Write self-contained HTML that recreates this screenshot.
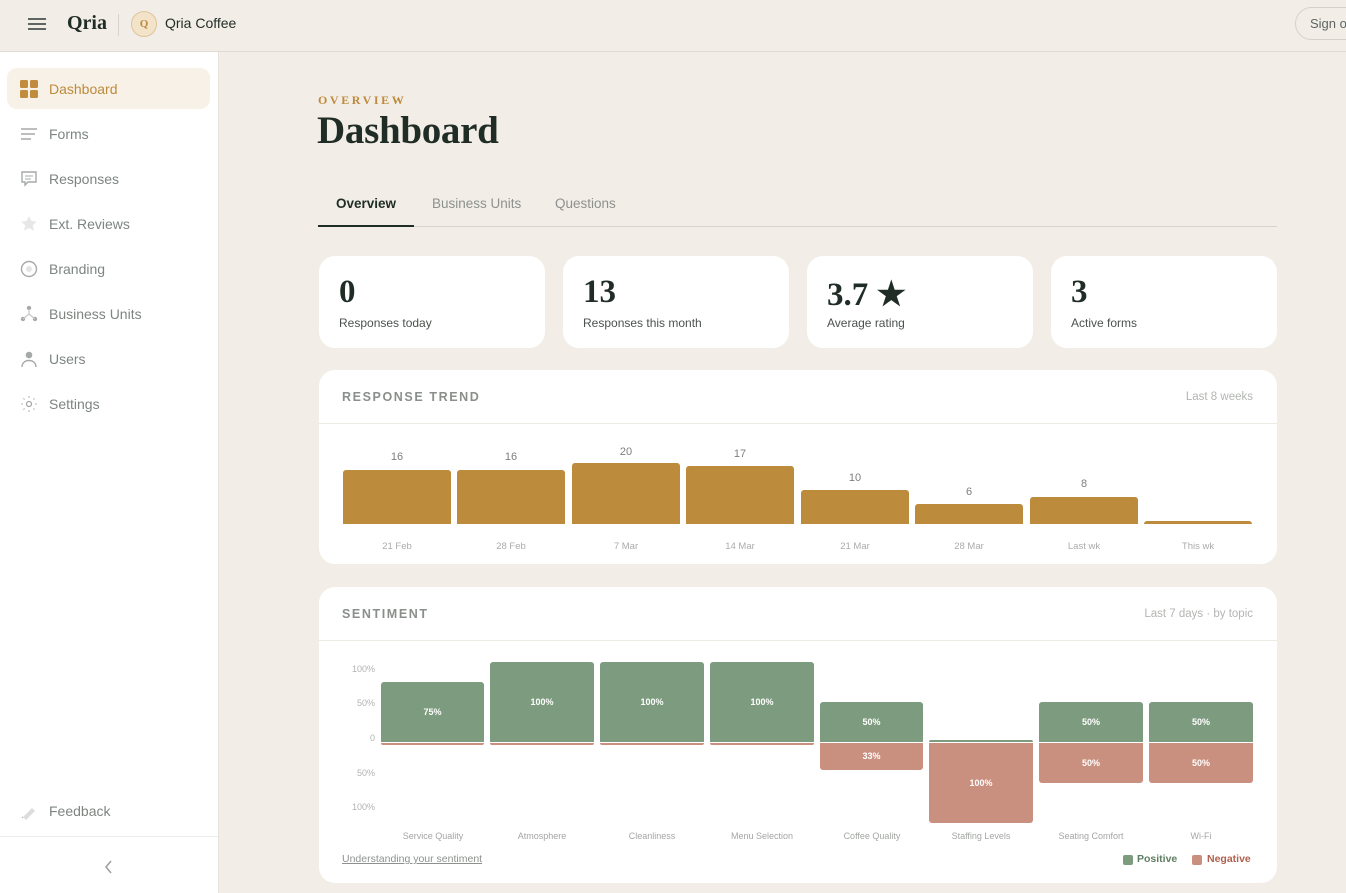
<!DOCTYPE html>
<html><head><meta charset="utf-8"><style>
*{box-sizing:border-box;margin:0;padding:0}
body{width:1346px;height:893px;overflow:hidden;background:#f2ede6;font-family:"Liberation Sans",sans-serif;color:#1f2d26;position:relative}
.top{position:absolute;left:0;top:0;width:1346px;height:52px;border-bottom:1px solid #e0dbd3;background:#f2ede6}
.side{position:absolute;left:0;top:52px;width:219px;height:841px;background:#fff;border-right:1px solid #e6e2dc}
.nav{position:absolute;left:7px;width:203px;height:41px;border-radius:10px;display:flex;align-items:center;font-size:14px;color:#7d8580}
.nav svg{position:absolute;left:13px}
.nav span{position:absolute;left:42px}
.abs{position:absolute}
.card{position:absolute;background:#fff;border-radius:16px}
.stat .n{position:absolute;left:20px;top:18px;font-family:"Liberation Serif",serif;font-weight:bold;font-size:33px;color:#1f2d26}
.stat .l{position:absolute;left:20px;top:60px;font-size:12px;color:#4a524d}
.ch{position:absolute;left:0;top:0;right:0;height:54px;border-bottom:1px solid #eeeae4}
.ch b{position:absolute;left:23px;top:20px;font-size:12.5px;letter-spacing:1.6px;color:#8a8f8b}
.ch i{position:absolute;right:24px;top:21px;font-style:normal;font-size:11.5px;color:#b3b6b2}
.bar{position:absolute;background:#bd8b3c;border-radius:3px 3px 0 0}
.bv{position:absolute;width:108px;text-align:center;font-size:11px;color:#7b7f7b}
.bl{position:absolute;width:108px;text-align:center;font-size:9.5px;color:#a9aca9;top:541px}
.pos{position:absolute;background:#7d9b7e;border-radius:3px 3px 0 0;color:#fff;font-size:9px;font-weight:bold;text-align:center}
.neg{position:absolute;background:#c98f7f;border-radius:0 0 3px 3px;color:#fff;font-size:9px;font-weight:bold;text-align:center}
.yl{position:absolute;width:40px;text-align:right;font-size:9px;color:#b0b3b0;left:335px}
.cl{position:absolute;width:104px;text-align:center;font-size:9px;color:#a3a6a3;top:831px}
</style></head><body>
<div class="top">
 <svg class="abs" style="left:28px;top:17px" width="18" height="14"><path d="M0 2h18M0 7h18M0 12h18" stroke="#5d6661" stroke-width="2"/></svg>
 <div class="abs" style="left:67px;top:12px;font-family:'Liberation Serif',serif;font-weight:bold;font-size:20px;color:#1f2d26">Qria</div>
 <div class="abs" style="left:118px;top:14px;width:1px;height:22px;background:#d8d3cb"></div>
 <div class="abs" style="left:131px;top:11px;width:26px;height:26px;border-radius:50%;background:#f3e3c8;border:1px solid #dcc6a0;color:#bd8b3c;font-family:'Liberation Serif',serif;font-weight:bold;font-size:11px;text-align:center;line-height:24px">Q</div>
 <div class="abs" style="left:165px;top:15px;font-size:14px;color:#1f2d26">Qria Coffee</div>
 <div class="abs" style="left:1295px;top:7px;width:80px;height:33px;border:1px solid #d6d1c9;border-radius:17px;font-size:13px;color:#5d6661;padding:8px 0 0 14px">Sign out</div>
</div>
<div class="side">
 <div class="nav" style="top:16px;background:#f7f1e7;color:#bd8b3c"><svg width="18" height="18"><rect x="0" y="0" width="8" height="8" rx="1.5" fill="#c18c3e"/><rect x="10" y="0" width="8" height="8" rx="1.5" fill="#c18c3e"/><rect x="0" y="10" width="8" height="8" rx="1.5" fill="#c18c3e"/><rect x="10" y="10" width="8" height="8" rx="1.5" fill="#c18c3e"/></svg><span>Dashboard</span></div>
 <div class="nav" style="top:61px"><svg width="18" height="14"><path d="M1 2h16M1 7h14M1 12h10" stroke="#a6aaa7" stroke-width="1.5"/></svg><span>Forms</span></div>
 <div class="nav" style="top:106px"><svg width="18" height="18"><path d="M2 2h14v10H8l-3 3v-3H2z" fill="none" stroke="#a6aaa7" stroke-width="1.4"/><path d="M5 6h8M5 9h6" stroke="#a6aaa7"/></svg><span>Responses</span></div>
 <div class="nav" style="top:151px"><svg width="18" height="18"><path d="M9 1l2.4 5 5.4.6-4 3.7 1.1 5.4L9 13l-4.9 2.7 1.1-5.4-4-3.7L6.6 6z" fill="#e6e8e6"/></svg><span>Ext. Reviews</span></div>
 <div class="nav" style="top:196px"><svg width="18" height="18"><circle cx="9" cy="9" r="7.5" fill="none" stroke="#a6aaa7" stroke-width="1.4"/><circle cx="9" cy="9" r="3" fill="#e3e5e3"/></svg><span>Branding</span></div>
 <div class="nav" style="top:241px"><svg width="18" height="18"><circle cx="9" cy="3" r="2.2" fill="#a6aaa7"/><circle cx="3" cy="14" r="2.2" fill="#a6aaa7"/><circle cx="15" cy="14" r="2.2" fill="#a6aaa7"/><path d="M9 4v5l-6 5M9 9l6 5" stroke="#c8cac8" stroke-width="1.3" fill="none"/></svg><span>Business Units</span></div>
 <div class="nav" style="top:286px"><svg width="18" height="18"><circle cx="9" cy="5" r="3.3" fill="#a6aaa7"/><path d="M2 17c0-4 3-6.5 7-6.5s7 2.5 7 6.5" fill="none" stroke="#a6aaa7" stroke-width="1.4"/></svg><span>Users</span></div>
 <div class="nav" style="top:331px"><svg width="18" height="18"><circle cx="9" cy="9" r="2.5" fill="none" stroke="#a6aaa7" stroke-width="1.3"/><path d="M9 1v2M9 15v2M1 9h2M15 9h2M3.3 3.3l1.4 1.4M13.3 13.3l1.4 1.4M3.3 14.7l1.4-1.4M13.3 4.7l1.4-1.4" stroke="#c4c7c4" stroke-width="1.3"/></svg><span>Settings</span></div>
 <div class="nav" style="top:738px"><svg width="18" height="18"><path d="M3 15l9-9 3 3-9 9z" fill="#dcdedc"/><path d="M2 16l1-1" stroke="#aaa"/></svg><span>Feedback</span></div>
 <div class="abs" style="left:0;top:784px;width:218px;height:1px;background:#ececea"></div>
 <svg class="abs" style="left:104px;top:808px" width="10" height="14"><path d="M7 1L2 7l5 6" fill="none" stroke="#9a9e9b" stroke-width="1.5"/></svg>
</div>

<div class="abs" style="left:318px;top:93px;font-family:'Liberation Serif',serif;font-weight:bold;font-size:12px;letter-spacing:2.6px;color:#bd8b3c">OVERVIEW</div>
<div class="abs" style="left:317px;top:108px;font-family:'Liberation Serif',serif;font-weight:bold;font-size:39px;color:#1f2d26;letter-spacing:-0.3px">Dashboard</div>
<div class="abs" style="left:336px;top:196px;font-size:13.5px;font-weight:bold;color:#1f2d26">Overview</div>
<div class="abs" style="left:432px;top:196px;font-size:13.5px;color:#8d918e">Business Units</div>
<div class="abs" style="left:555px;top:196px;font-size:13.5px;color:#8d918e">Questions</div>
<div class="abs" style="left:318px;top:226px;width:959px;height:1px;background:#d8d4cd"></div>
<div class="abs" style="left:318px;top:225px;width:96px;height:2px;background:#1f2d26"></div>

<div class="card stat" style="left:319px;top:256px;width:226px;height:92px"><div class="n">0</div><div class="l">Responses today</div></div>
<div class="card stat" style="left:563px;top:256px;width:226px;height:92px"><div class="n">13</div><div class="l">Responses this month</div></div>
<div class="card stat" style="left:807px;top:256px;width:226px;height:92px"><div class="n">3.7 ★</div><div class="l">Average rating</div></div>
<div class="card stat" style="left:1051px;top:256px;width:226px;height:92px"><div class="n">3</div><div class="l">Active forms</div></div>

<div class="card" style="left:319px;top:370px;width:958px;height:194px"><div class="ch"><b>RESPONSE TREND</b><i>Last 8 weeks</i></div></div>
<div class="bar" style="left:343px;top:470px;width:108px;height:54px"></div><div class="bv" style="left:343px;top:451px">16</div><div class="bl" style="left:343px">21 Feb</div>
<div class="bar" style="left:457px;top:470px;width:108px;height:54px"></div><div class="bv" style="left:457px;top:451px">16</div><div class="bl" style="left:457px">28 Feb</div>
<div class="bar" style="left:572px;top:463px;width:108px;height:61px"></div><div class="bv" style="left:572px;top:446px">20</div><div class="bl" style="left:572px">7 Mar</div>
<div class="bar" style="left:686px;top:466px;width:108px;height:58px"></div><div class="bv" style="left:686px;top:448px">17</div><div class="bl" style="left:686px">14 Mar</div>
<div class="bar" style="left:801px;top:490px;width:108px;height:34px"></div><div class="bv" style="left:801px;top:472px">10</div><div class="bl" style="left:801px">21 Mar</div>
<div class="bar" style="left:915px;top:504px;width:108px;height:20px"></div><div class="bv" style="left:915px;top:486px">6</div><div class="bl" style="left:915px">28 Mar</div>
<div class="bar" style="left:1030px;top:497px;width:108px;height:27px"></div><div class="bv" style="left:1030px;top:478px">8</div><div class="bl" style="left:1030px">Last wk</div>
<div class="bar" style="left:1144px;top:521px;width:108px;height:3px"></div><div class="bl" style="left:1144px">This wk</div>

<div class="card" style="left:319px;top:587px;width:958px;height:296px"><div class="ch"><b>SENTIMENT</b><i>Last 7 days · by topic</i></div></div>
<div class="yl" style="top:664px">100%</div><div class="yl" style="top:698px">50%</div><div class="yl" style="top:733px">0</div><div class="yl" style="top:768px">50%</div><div class="yl" style="top:802px">100%</div>
<div class="pos" style="left:381px;top:682px;width:103px;height:60px;line-height:60px">75%</div><div class="neg" style="left:381px;top:743px;width:103px;height:2px"></div>
<div class="pos" style="left:490px;top:662px;width:104px;height:80px;line-height:80px">100%</div><div class="neg" style="left:490px;top:743px;width:104px;height:2px"></div>
<div class="pos" style="left:600px;top:662px;width:104px;height:80px;line-height:80px">100%</div><div class="neg" style="left:600px;top:743px;width:104px;height:2px"></div>
<div class="pos" style="left:710px;top:662px;width:104px;height:80px;line-height:80px">100%</div><div class="neg" style="left:710px;top:743px;width:104px;height:2px"></div>
<div class="pos" style="left:820px;top:702px;width:103px;height:40px;line-height:40px">50%</div><div class="neg" style="left:820px;top:743px;width:103px;height:27px;line-height:27px">33%</div>
<div class="pos" style="left:929px;top:740px;width:104px;height:2px"></div><div class="neg" style="left:929px;top:743px;width:104px;height:80px;line-height:80px">100%</div>
<div class="pos" style="left:1039px;top:702px;width:104px;height:40px;line-height:40px">50%</div><div class="neg" style="left:1039px;top:743px;width:104px;height:40px;line-height:40px">50%</div>
<div class="pos" style="left:1149px;top:702px;width:104px;height:40px;line-height:40px">50%</div><div class="neg" style="left:1149px;top:743px;width:104px;height:40px;line-height:40px">50%</div>
<div class="cl" style="left:381px">Service Quality</div><div class="cl" style="left:490px">Atmosphere</div><div class="cl" style="left:600px">Cleanliness</div><div class="cl" style="left:710px">Menu Selection</div><div class="cl" style="left:820px">Coffee Quality</div><div class="cl" style="left:929px">Staffing Levels</div><div class="cl" style="left:1039px">Seating Comfort</div><div class="cl" style="left:1149px">Wi-Fi</div>
<div class="abs" style="left:342px;top:853px;font-size:10.5px;color:#8d918e;text-decoration:underline">Understanding your sentiment</div>
<div class="abs" style="left:1123px;top:855px;width:10px;height:10px;border-radius:2px;background:#7d9b7e"></div>
<div class="abs" style="left:1137px;top:853px;font-size:10.5px;font-weight:bold;color:#5f7e61">Positive</div>
<div class="abs" style="left:1192px;top:855px;width:10px;height:10px;border-radius:2px;background:#c98f7f"></div>
<div class="abs" style="left:1207px;top:853px;font-size:10.5px;font-weight:bold;color:#b0604f">Negative</div>
</body></html>
